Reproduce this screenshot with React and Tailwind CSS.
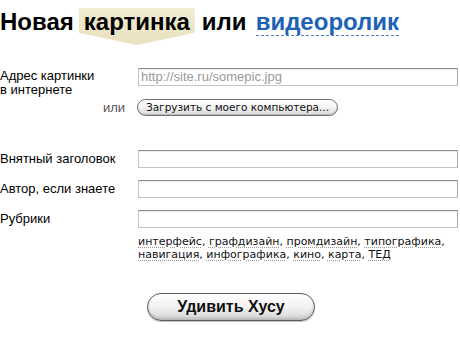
import React from "react";

/* ================= DATA ================= */

const rubrics = [
  ["интерфейс", "графдизайн", "промдизайн", "типографика"],
  ["навигация", "инфографика", "кино", "карта", "ТЕД"],
];

/* ================= COMPONENT ================= */

export default function App() {
  return (
    <div className="w-[460px] h-[340px] overflow-hidden bg-white text-black font-['Liberation_Sans',Arial,sans-serif]">
      {/* ================= HEADER ================= */}
      <h1 className="relative isolate mt-2 text-[24px] font-bold leading-[28px] whitespace-nowrap">
        Новая
        <span className="relative inline-block ml-[5px] px-[5px]">
          <span className="absolute inset-x-0 top-0 h-[37px] -z-10 bg-gradient-to-b from-[#f1ecd3] to-[#e8e0bd] [clip-path:polygon(0_0,100%_0,100%_67%,50%_100%,0_67%)]" />
          картинка
        </span>
        <span className="ml-[7px]">или</span>
        <span className="ml-[9px] inline-block leading-[27px] text-[#1d62b6] border-b border-dashed border-[#4a86cf]">
          видеоролик
        </span>
      </h1>

      {/* ================= URL ================= */}
      <div className="mt-[32px] flex items-start">
        <label className="w-[138px] pt-[1px] text-[13px] leading-[14px]">
          Адрес картинки
          <br />в интернете
        </label>
        <Field placeholder="http://site.ru/somepic.jpg" />
      </div>

      <div className="mt-[1px] flex items-center">
        <span className="w-[137px] pr-[12px] text-right text-[13px] text-[#555]">
          или
        </span>
        <button className="h-[17px] w-[201px] rounded-full border border-[#6f6f6f] bg-gradient-to-b from-white via-[#f3f3f3] to-[#d9d9d9] shadow-[inset_0_-1px_1px_rgba(0,0,0,0.15)] text-[10.5px] leading-[15px] text-[#111] font-['DejaVu_Sans',Verdana,sans-serif]">
          Загрузить с моего компьютера...
        </button>
      </div>

      {/* ================= FIELDS ================= */}
      <Row label="Внятный заголовок" className="mt-[32px]" />
      <Row label="Автор, если знаете" className="mt-[12px]" />
      <Row label="Рубрики" className="mt-[12px]" />

      <div className="mt-[7px] ml-[138px] text-[11px] leading-[13px] text-[#111] font-['DejaVu_Sans',Verdana,sans-serif]">
        {rubrics.map((line, i) => (
          <div key={i}>
            {line.map((r, j) => (
              <React.Fragment key={r}>
                <span className="underline decoration-dotted decoration-[#999] underline-offset-2">
                  {r}
                </span>
                {j < line.length - 1 || i === 0 ? ", " : ""}
              </React.Fragment>
            ))}
          </div>
        ))}
      </div>

      {/* ================= SUBMIT ================= */}
      <button className="mt-[32px] ml-[147px] block h-[28px] w-[168px] rounded-full border border-[#5c5c5c] bg-gradient-to-b from-white via-[#f2f2f2] to-[#d4d4d4] shadow-[inset_0_-2px_3px_rgba(0,0,0,0.15),0_1px_1px_rgba(0,0,0,0.25)] text-[16px] font-bold leading-[26px] text-[#111]">
        Удивить Хусу
      </button>
    </div>
  );
}

/* ================= SMALL UI COMPONENTS ================= */

function Row({ label, className }) {
  return (
    <div className={`flex items-center ${className}`}>
      <label className="w-[138px] text-[13px] leading-[15px]">{label}</label>
      <Field />
    </div>
  );
}

function Field({ placeholder }) {
  return (
    <input
      type="text"
      placeholder={placeholder}
      className="h-[18px] w-[320px] border border-[#c4c4c4] border-t-[#8c8c8c] border-r-[#a9a9a9] bg-white px-[2px] text-[13px] outline-none placeholder:text-[#9a9a9a] shadow-[inset_0_1px_1px_rgba(0,0,0,0.08)]"
    />
  );
}
